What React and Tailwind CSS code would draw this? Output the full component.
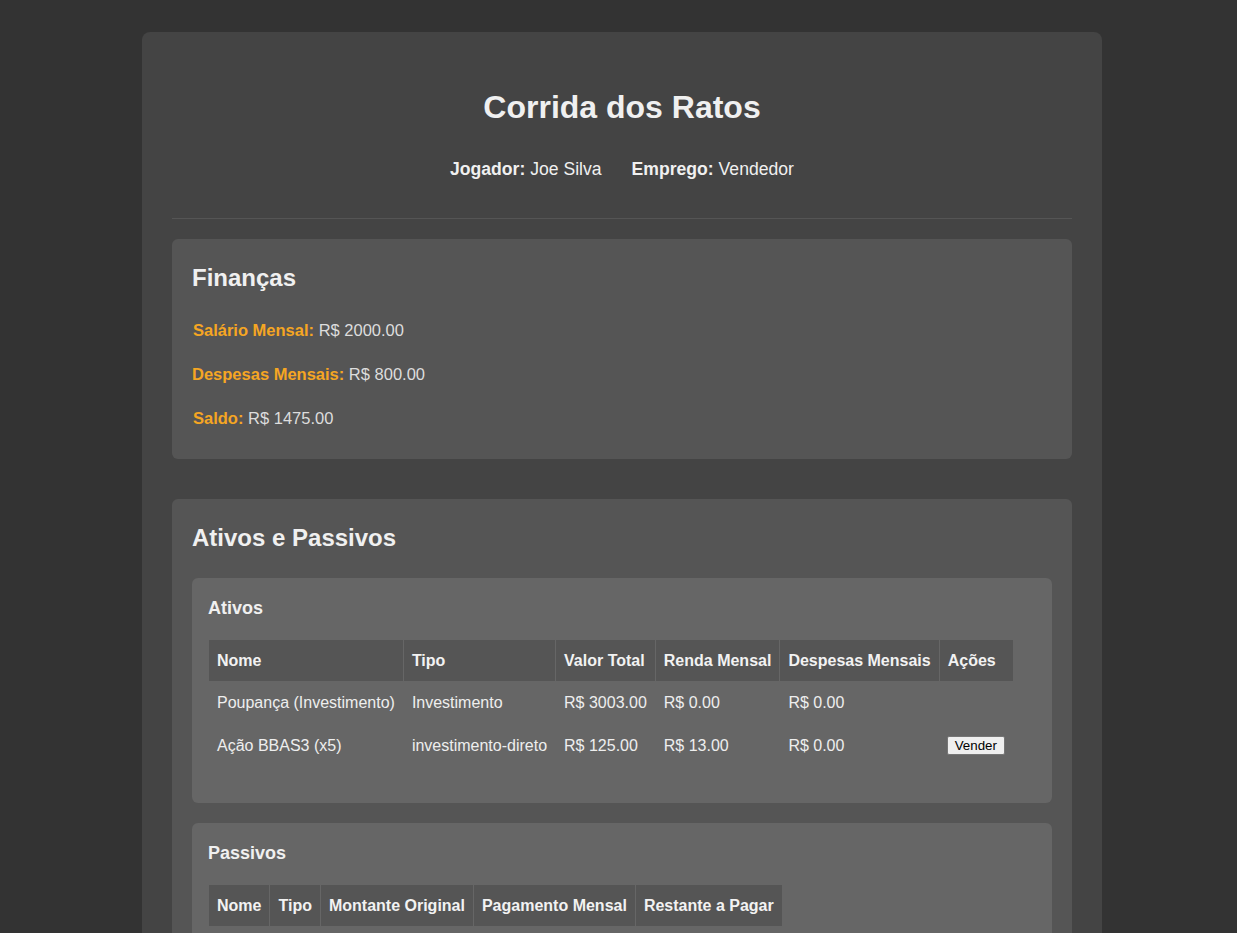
import React from 'react';

const ativos = [
    { nome: 'Poupança (Investimento)', tipo: 'Investimento', valor: 'R$ 3003.00', renda: 'R$ 0.00', despesas: 'R$ 0.00', vender: false },
    { nome: 'Ação BBAS3 (x5)', tipo: 'investimento-direto', valor: 'R$ 125.00', renda: 'R$ 13.00', despesas: 'R$ 0.00', vender: true },
];

const ativosCols = ['Nome', 'Tipo', 'Valor Total', 'Renda Mensal', 'Despesas Mensais', 'Ações'];
const passivosCols = ['Nome', 'Tipo', 'Montante Original', 'Pagamento Mensal', 'Restante a Pagar'];

function Th({ children }) {
    return (
        <th className="border border-[#666] bg-[#555] px-2 py-[11px] text-left text-[16px] font-bold leading-[19px] text-[#f2f2f2]">
            {children}
        </th>
    );
}

function Td({ children }) {
    return (
        <td className="border border-[#666] px-2 py-[11px] text-left align-middle text-[16px] leading-[19px] text-[#eee]">
            {children}
        </td>
    );
}

function FinanceItem({ label, value }) {
    return (
        <div className="pl-px text-[16.5px] leading-[18px]">
            <span className="font-bold text-[#f5a623]">{label}:</span>{' '}
            <span className="text-[#ddd]">{value}</span>
        </div>
    );
}

export default function App() {
    return (
        <div className="min-h-screen bg-[#333] pt-8 pb-8 font-['Liberation_Sans',Arial,sans-serif] text-[#eee]">
            <div className="ml-[142px] w-[960px] rounded-lg bg-[#444] px-[30px] pt-[57px] pb-[30px]">
                <header className="border-b border-[#555] pb-[38px] text-center">
                    <h1 className="text-[32px] font-bold leading-[37px] text-[#f0f0f0]">Corrida dos Ratos</h1>
                    <div className="mt-[33px] flex justify-center gap-[30px] text-[17.6px] leading-[21px] text-[#f0f0f0]">
                        <span><b>Jogador:</b> Joe Silva</span>
                        <span><b>Emprego:</b> Vendedor</span>
                    </div>
                </header>

                <section className="mt-5 rounded-md bg-[#555] px-5 pt-5 pb-[32px]">
                    <h2 className="mt-[5px] text-[24px] font-bold leading-[28px] text-[#f0f0f0]">Finanças</h2>
                    <div className="mt-[29px] flex flex-col gap-[26px]">
                        <FinanceItem label="Salário Mensal" value="R$ 2000.00" />
                        <div className="-ml-px">
                            <FinanceItem label="Despesas Mensais" value="R$ 800.00" />
                        </div>
                        <FinanceItem label="Saldo" value="R$ 1475.00" />
                    </div>
                </section>

                <section className="mt-10 rounded-md bg-[#555] px-5 pt-5 pb-5">
                    <h2 className="mt-[5px] text-[24px] font-bold leading-[28px] text-[#f0f0f0]">Ativos e Passivos</h2>

                    <div className="mt-[26px] rounded-md bg-[#666] px-4 pt-5 pb-[36px]">
                        <h3 className="text-[18px] font-bold leading-[21px] text-[#f0f0f0]">Ativos</h3>
                        <table className="mt-5 border-collapse border border-[#666]">
                            <thead>
                                <tr>
                                    {ativosCols.map(c => <Th key={c}>{c}</Th>)}
                                </tr>
                            </thead>
                            <tbody>
                                {ativos.map(a => (
                                    <tr key={a.nome}>
                                        <Td>{a.nome}</Td>
                                        <Td>{a.tipo}</Td>
                                        <Td>{a.valor}</Td>
                                        <Td>{a.renda}</Td>
                                        <Td>{a.despesas}</Td>
                                        <Td>
                                            {a.vender && (
                                                <button className="-ml-px rounded-[2px] border border-[#767676] bg-[#efefef] px-[7px] py-px text-[13.33px] leading-[15px] text-black">
                                                    Vender
                                                </button>
                                            )}
                                        </Td>
                                    </tr>
                                ))}
                            </tbody>
                        </table>
                    </div>

                    <div className="mt-5 rounded-md bg-[#666] px-4 pt-5 pb-[36px]">
                        <h3 className="text-[18px] font-bold leading-[21px] text-[#f0f0f0]">Passivos</h3>
                        <table className="mt-5 border-collapse border border-[#666]">
                            <thead>
                                <tr>
                                    {passivosCols.map(c => <Th key={c}>{c}</Th>)}
                                </tr>
                            </thead>
                            <tbody />
                        </table>
                    </div>
                </section>
            </div>
        </div>
    );
}
